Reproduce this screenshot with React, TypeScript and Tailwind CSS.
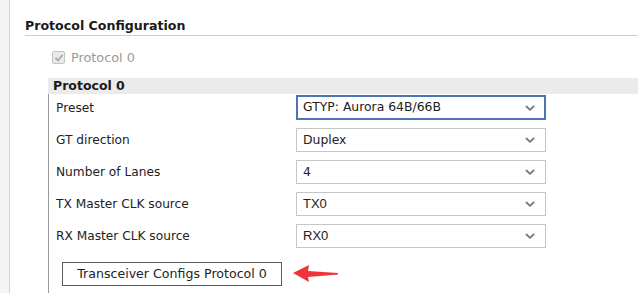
import React from "react";

const rows = [
  { label: "Preset", value: "GTYP: Aurora 64B/66B", focused: true },
  { label: "GT direction", value: "Duplex" },
  { label: "Number of Lanes", value: "4" },
  { label: "TX Master CLK source", value: "TX0", arial: true },
  { label: "RX Master CLK source", value: "RX0", arial: true },
];

const Chevron = () => (
  <svg width="10" height="6" viewBox="0 0 10 6" className="shrink-0">
    <path d="M1 1 L5 4.8 L9 1" fill="none" stroke="#777" strokeWidth="1.8" />
  </svg>
);

const App: React.FC = () => {
  return (
    <div className="flex w-[638px] h-[293px] overflow-hidden bg-white text-[12px] text-[#222] font-['DejaVu_Sans',sans-serif]">
      <div className="w-[10px] shrink-0 bg-[#f4f4f4] border-r border-[#d2d2d2]" />

      <div className="flex-1 pl-[15px] pt-[18px]">
        <div className="text-[12.6px] font-bold leading-[16px] text-[#1a1a1a]">Protocol Configuration</div>
        <div className="mt-px h-px bg-[#cfcfcf]" />

        <label className="flex items-center gap-[6px] ml-[27px] mt-[12px] text-[12.8px] text-[#9a9a9a]">
          <span className="w-[13px] h-[13px] rounded-[2px] border border-[#c4c4c4] bg-[#e9e9e9] flex items-center justify-center">
            <svg width="10" height="10" viewBox="0 0 10 10">
              <path d="M1.5 5 L4 7.5 L8.5 2" fill="none" stroke="#a8a8a8" strokeWidth="1.8" />
            </svg>
          </span>
          Protocol 0
        </label>

        <div className="ml-[23px] mt-[11px]">
          <div className="h-[16px] bg-[#ebebeb] pl-[5px] text-[12.5px] font-bold leading-[16px] text-[#1a1a1a]">Protocol 0</div>
          <div className="border-l border-[#9a9a9a] pl-[7px] pt-px pb-[10px] flex flex-col">
            {rows.map((r, i) => (
              <div key={r.label} className={`flex items-center ${i > 0 ? "mt-[8px]" : ""}`}>
                <div className="w-[240px] text-[12.2px]">{r.label}</div>
                <div
                  className={
                    r.focused
                      ? "w-[250px] h-[25px] border-2 border-[#4f74b5] flex items-center justify-between pl-[5px] pr-[9px]"
                      : "w-[250px] h-[24px] border border-[#c6c6c6] flex items-center justify-between pl-[6px] pr-[10px]"
                  }
                >
                  <span className={r.arial ? "font-['Liberation_Sans',sans-serif] text-[13px]" : "text-[12.4px]"}>{r.value}</span>
                  <Chevron />
                </div>
              </div>
            ))}

            <div className="flex items-center mt-[14px]">
              <button className="ml-[6px] w-[220px] h-[24px] border border-[#5a5a5a] bg-white text-[12.6px] text-[#222]">
                Transceiver Configs Protocol 0
              </button>
              <svg width="46" height="18" viewBox="0 0 46 18" className="ml-[11px]">
                <path d="M0 8 L16 0 L15 6 L45 8 L45 9.5 L15 12 L16 17 Z" fill="#f0333a" />
              </svg>
            </div>
          </div>
        </div>
      </div>
    </div>
  );
};

export default App;
